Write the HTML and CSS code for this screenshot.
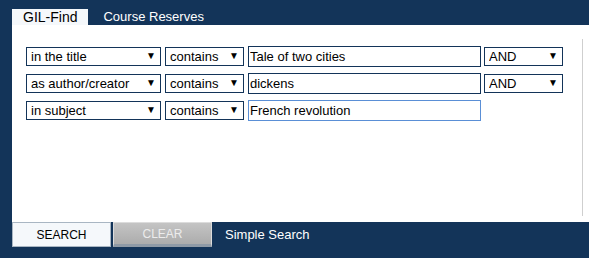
FILE: index.html
```html
<!DOCTYPE html>
<html lang="en">
<head>
    <meta charset="UTF-8">
    <title>GIL-Find Advanced Search</title>
    <link rel="stylesheet" href="styles.css">
</head>
<body>
    <div class="tabs">
        <span class="tab active">GIL-Find</span>
        <span class="tab">Course Reserves</span>
    </div>

    <div class="panel">
        <div class="rows">
            <div class="row">
                <span class="pick field"><select><option>in the title</option></select></span>
                <span class="pick op"><select><option>contains</option></select></span>
                <input type="text" class="term" value="Tale of two cities">
                <span class="pick bool"><select><option>AND</option></select></span>
            </div>
            <div class="row">
                <span class="pick field"><select><option>as author/creator</option></select></span>
                <span class="pick op"><select><option>contains</option></select></span>
                <input type="text" class="term" value="dickens">
                <span class="pick bool"><select><option>AND</option></select></span>
            </div>
            <div class="row">
                <span class="pick field"><select><option>in subject</option></select></span>
                <span class="pick op"><select><option>contains</option></select></span>
                <input type="text" class="term focused" value="French revolution" autofocus>
            </div>
        </div>
    </div>

    <div class="actions">
        <button class="search">SEARCH</button>
        <button class="clear">CLEAR</button>
        <span class="simple">Simple Search</span>
    </div>
</body>
</html>
```

FILE: styles.css
```css
* {
    margin: 0;
    padding: 0;
    box-sizing: border-box;
    font-family: "Liberation Sans", Arial, sans-serif;
}

body {
    background: #133459;
    padding-left: 12px;
    height: 258px;
    overflow: hidden;
}

.tabs {
    display: flex;
    align-items: flex-end;
    height: 25px;
}

.tab {
    height: 16px;
    line-height: 16px;
    font-size: 13px;
    color: #fff;
    padding: 0 15px;
}

.tab.active {
    background: #f5f8fb;
    color: #000;
    font-size: 14px;
    padding: 0 11px;
}

.panel {
    background: #fff;
    height: 197px;
    padding: 14px 6px 6px 14px;
}

.rows {
    height: 177px;
    border-right: 1px solid #cfcfcf;
    padding-top: 7px;
    display: flex;
    flex-direction: column;
    gap: 6px;
}

.row {
    display: flex;
    align-items: center;
    height: 21px;
}

.pick {
    position: relative;
    display: inline-block;
    height: 19px;
    margin-right: 4px;
}

.pick::after {
    content: "\25BC";
    position: absolute;
    right: 5px;
    top: 3px;
    font-size: 10px;
    color: #000;
    pointer-events: none;
}

.pick select {
    appearance: none;
    -webkit-appearance: none;
    width: 100%;
    height: 19px;
    border: 1px solid #133459;
    border-radius: 0;
    background: #fff;
    font-size: 13px;
    color: #000;
    padding: 0 0 0 4px;
    outline: none;
}

.field { width: 135px; }
.op { width: 79px; }
.bool { width: 79px; margin-left: 3px; }

.term {
    width: 233px;
    height: 21px;
    border: 1px solid #133459;
    font-size: 13px;
    padding: 0 1px;
    color: #000;
    outline: none;
}

.term.focused {
    border-color: #5a8fd6;
}

.actions {
    display: flex;
    align-items: flex-start;
    height: 36px;
}

.actions button {
    width: 99px;
    height: 25px;
    font-size: 12px;
    cursor: pointer;
}

.search {
    background: #f5f8fb;
    border: 1px solid #a9b6c3;
    color: #000;
}

.clear {
    margin-left: 2px;
    background: linear-gradient(#c4c4c4, #acacac);
    border: 1px solid #dcdcdc;
    border-bottom: 3px solid #8f9aa6;
    color: #ececec;
}

.simple {
    color: #fff;
    font-size: 13px;
    margin-left: 13px;
    line-height: 25px;
}
```
